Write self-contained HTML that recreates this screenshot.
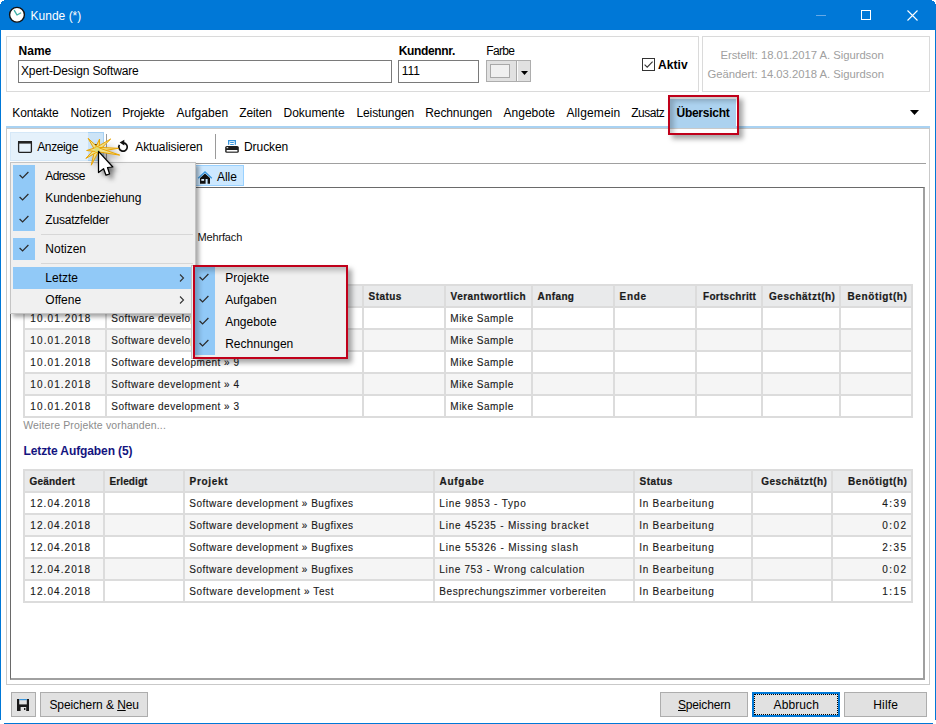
<!DOCTYPE html>
<html><head><meta charset="utf-8"><title>Kunde</title><style>
html,body{margin:0;padding:0}
body{width:936px;height:724px;position:relative;overflow:hidden;background:#fff;font-family:"Liberation Sans",sans-serif;font-size:12px;color:#000}
.a{position:absolute}
.t{position:absolute;white-space:nowrap;line-height:14px}
u{text-decoration:underline;text-underline-offset:1px}
</style></head><body>
<div class="a" style="left:0px;top:0px;width:936px;height:30px;background:#0078d7"></div>
<div class="a" style="left:0px;top:0px;width:1px;height:720px;background:#0078d7"></div>
<div class="a" style="left:935px;top:0px;width:1px;height:720px;background:#0078d7"></div>
<div class="a" style="left:4px;top:723px;width:929px;height:1px;background:#0078d7"></div>
<div class="a" style="left:0px;top:0px;width:4px;height:1px;background:#fff"></div>
<div class="a" style="left:0px;top:1px;width:2px;height:1px;background:#fff"></div>
<div class="a" style="left:0px;top:2px;width:1px;height:2px;background:#fff"></div>
<div class="a" style="left:932px;top:0px;width:4px;height:1px;background:#fff"></div>
<div class="a" style="left:934px;top:1px;width:2px;height:1px;background:#fff"></div>
<div class="a" style="left:935px;top:2px;width:1px;height:2px;background:#fff"></div>
<svg class="a" style="left:8px;top:6px" width="18" height="18" viewBox="0 0 18 18">
<circle cx="9" cy="8.75" r="7.4" fill="#fff" stroke="#111" stroke-width="1.4"/>
<path d="M6.4 4.6 L9 9 L12.6 7" fill="none" stroke="#3fb0a8" stroke-width="1.4" stroke-linecap="round" stroke-linejoin="round"/>
</svg>
<div class="t" style="left:30.60px;top:9.00px;font-size:12px;color:#fff;">Kunde (*)</div>
<div class="a" style="left:816px;top:15px;width:10px;height:1px;background:#66a9e6"></div>
<div class="a" style="left:861px;top:10px;width:10px;height:10px;border:1px solid #fff;box-sizing:border-box"></div>
<svg class="a" style="left:906px;top:9px" width="13" height="13" viewBox="0 0 13 13">
<path d="M1.5 1.5 L11.5 11.5 M11.5 1.5 L1.5 11.5" stroke="#fff" stroke-width="1.1"/></svg>
<div class="a" style="left:6px;top:36px;width:693px;height:56px;border:1px solid #dadada;box-sizing:border-box"></div>
<div class="a" style="left:702px;top:36px;width:228px;height:56px;border:1px solid #dadada;box-sizing:border-box"></div>
<div class="t" style="left:18.60px;top:44.00px;font-size:12px;font-weight:700;">Name</div>
<div class="a" style="left:18px;top:60px;width:374px;height:23px;border:1px solid #7a7a7a;box-sizing:border-box;background:#fff"></div>
<div class="t" style="left:21.00px;top:64.00px;font-size:12px;letter-spacing:-0.15px;">Xpert-Design Software</div>
<div class="t" style="left:398.70px;top:44.00px;font-size:12px;font-weight:700;letter-spacing:-0.34px;">Kundennr.</div>
<div class="a" style="left:398px;top:60px;width:81px;height:23px;border:1px solid #7a7a7a;box-sizing:border-box;background:#fff"></div>
<div class="t" style="left:401.70px;top:64.00px;font-size:12px;">111</div>
<div class="t" style="left:486.30px;top:44.00px;font-size:12px;letter-spacing:-0.69px;">Farbe</div>
<div class="a" style="left:486px;top:60px;width:45px;height:22px;border:1px solid #adadad;box-sizing:border-box;background:#e1e1e1"></div>
<div class="a" style="left:490px;top:64px;width:20px;height:14px;border:1px solid #a8a8a8;box-sizing:border-box;background:#f0f0f0"></div>
<div class="a" style="left:516px;top:61px;width:1px;height:20px;background:#a8a8a8"></div>
<div class="a" style="left:517px;top:61px;width:1px;height:20px;background:#fbfbfb"></div>
<svg class="a" style="left:520px;top:70px" width="10" height="6"><path d="M1 1 H8 L4.5 5 Z" fill="#000"/></svg>
<div class="a" style="left:642px;top:58px;width:13px;height:13px;border:1px solid #333;box-sizing:border-box;background:#fff"></div>
<svg class="a" style="left:642px;top:58px" width="13" height="13"><path d="M2.6 6.6 L5.2 9.2 L10.6 3.6" fill="none" stroke="#333" stroke-width="1.1"/></svg>
<div class="t" style="left:658.00px;top:58.00px;font-size:12px;font-weight:700;letter-spacing:0.06px;">Aktiv</div>
<div class="t" style="left:720.50px;top:48.00px;font-size:11.3px;color:#a0a0a0;letter-spacing:-0.04px;">Erstellt: 18.01.2017 A. Sigurdson</div>
<div class="t" style="left:707.50px;top:67.00px;font-size:11.3px;color:#a0a0a0;letter-spacing:-0.02px;">Geändert: 14.03.2018 A. Sigurdson</div>
<div class="a" style="left:6px;top:126px;width:924px;height:2px;background:#a9d2f2"></div>
<div class="a" style="left:6px;top:128px;width:924px;height:557px;border:1px solid #c9c9c9;border-top-color:#c9c9c9;box-sizing:border-box"></div>
<div class="a" style="left:670px;top:99px;width:66px;height:29px;background:#acd2ef"></div>
<div class="t" style="left:12.30px;top:106.00px;font-size:12px;letter-spacing:-0.14px;">Kontakte</div>
<div class="t" style="left:70.50px;top:106.00px;font-size:12px;letter-spacing:0.05px;">Notizen</div>
<div class="t" style="left:122.30px;top:106.00px;font-size:12px;letter-spacing:-0.25px;">Projekte</div>
<div class="t" style="left:176.40px;top:106.00px;font-size:12px;letter-spacing:0.04px;">Aufgaben</div>
<div class="t" style="left:239.20px;top:106.00px;font-size:12px;letter-spacing:-0.12px;">Zeiten</div>
<div class="t" style="left:283.60px;top:106.00px;font-size:12px;letter-spacing:-0.05px;">Dokumente</div>
<div class="t" style="left:356.40px;top:106.00px;font-size:12px;letter-spacing:-0.09px;">Leistungen</div>
<div class="t" style="left:425.30px;top:106.00px;font-size:12px;letter-spacing:-0.12px;">Rechnungen</div>
<div class="t" style="left:503.60px;top:106.00px;font-size:12px;">Angebote</div>
<div class="t" style="left:566.40px;top:106.00px;font-size:12px;letter-spacing:0.14px;">Allgemein</div>
<div class="t" style="left:631.30px;top:106.00px;font-size:12px;letter-spacing:-0.52px;">Zusatz</div>
<div class="t" style="left:676.50px;top:106.00px;font-size:12px;font-weight:700;letter-spacing:-0.27px;">Übersicht</div>
<svg class="a" style="left:909px;top:109px" width="12" height="8"><path d="M1 1 H10 L5.5 6 Z" fill="#000"/></svg>
<div class="a" style="left:10px;top:132px;width:94px;height:29px;background:#e5f1fb;border:1px solid #d5e8f8;box-sizing:border-box"></div>
<div class="a" style="left:88px;top:132px;width:16px;height:29px;background:#cce4f7;border:1px solid #a6d0f3;border-left:none;box-sizing:border-box"></div>
<svg class="a" style="left:92px;top:143px" width="8" height="5"><path d="M1.5 1 H5.5 L3.5 3.2 Z" fill="#000"/></svg>
<svg class="a" style="left:17px;top:140px" width="16" height="14" viewBox="0 0 16 14">
<rect x="1.6" y="1.6" width="12.8" height="10.8" rx="0.8" fill="none" stroke="#222" stroke-width="1.3"/>
<rect x="1" y="1" width="14" height="2.6" fill="#222"/></svg>
<div class="t" style="left:37.20px;top:140.00px;font-size:12px;letter-spacing:-0.37px;">Anzeige</div>
<div class="a" style="left:106px;top:134px;width:1px;height:25px;background:#9a9a9a"></div>
<svg class="a" style="left:115px;top:138px" width="16" height="16" viewBox="0 0 16 16">
<path d="M4.4 6.9 A4.2 4.2 0 1 0 8.3 4.8" fill="none" stroke="#111" stroke-width="1.7"/>
<path d="M4.6 4.6 L9.3 1.8 L9.3 7.6 Z" fill="#111"/></svg>
<div class="t" style="left:135.30px;top:140.00px;font-size:12px;letter-spacing:-0.11px;">Aktualisieren</div>
<div class="a" style="left:215px;top:134px;width:1px;height:25px;background:#9a9a9a"></div>
<svg class="a" style="left:224px;top:139px" width="16" height="15" viewBox="0 0 16 15">
<path d="M4.65 5.8 V1.65 H11.35 V5.8" fill="none" stroke="#3a96dd" stroke-width="1.3"/>
<path d="M6.2 3.5 H9.8 M6.2 5.5 H9.8" stroke="#3a96dd" stroke-width="1"/>
<rect x="1.2" y="7" width="13.6" height="6.8" rx="1.6" fill="#1e1e1e"/>
<rect x="2.6" y="11" width="10.8" height="1.6" fill="#fff"/>
<rect x="2.6" y="8.2" width="1.6" height="1" fill="#fff"/></svg>
<div class="t" style="left:244.00px;top:140.00px;font-size:12px;letter-spacing:-0.07px;">Drucken</div>
<div class="a" style="left:10px;top:163px;width:916px;height:1px;background:#a0a0a0"></div>
<div class="a" style="left:10px;top:187px;width:915px;height:493px;border-top:1px solid #6a6a6a;border-left:1px solid #6a6a6a;border-right:2px solid #a0a0a0;border-bottom:2px solid #a0a0a0;box-sizing:border-box;background:#fff"></div>
<div class="a" style="left:150px;top:165px;width:94px;height:21px;background:#cce8ff;border:1px solid #99d1ff;box-sizing:border-box"></div>
<svg class="a" style="left:197px;top:170px" width="16" height="15" viewBox="0 0 16 15">
<path d="M3 13.8 V8 L8 3.6 L13 8 V13.8 H10.6 V9 H8.6 V13.8 Z" fill="#111"/>
<rect x="4.3" y="9" width="2.8" height="1.8" fill="#dff0ff"/>
<path d="M1.2 8.2 L8 2 L14.8 8.2" fill="none" stroke="#3a96dd" stroke-width="1.3"/></svg>
<div class="t" style="left:217.00px;top:170.00px;font-size:12px;letter-spacing:-0.05px;">Alle</div>
<div class="t" style="left:197.40px;top:230.00px;font-size:11px;color:#111;letter-spacing:-0.13px;">Mehrfach</div>
<div class="a" style="left:23px;top:284px;width:890px;height:134px;background:#dcdcdc"></div>
<div class="a" style="left:25px;top:286px;width:80px;height:20px;background:#e9eaeb"></div>
<div class="a" style="left:107px;top:286px;width:255px;height:20px;background:#e9eaeb"></div>
<div class="a" style="left:364px;top:286px;width:80px;height:20px;background:#e9eaeb"></div>
<div class="a" style="left:446px;top:286px;width:85px;height:20px;background:#e9eaeb"></div>
<div class="a" style="left:533px;top:286px;width:80px;height:20px;background:#e9eaeb"></div>
<div class="a" style="left:615px;top:286px;width:80px;height:20px;background:#e9eaeb"></div>
<div class="a" style="left:697px;top:286px;width:64px;height:20px;background:#e9eaeb"></div>
<div class="a" style="left:763px;top:286px;width:76px;height:20px;background:#e9eaeb"></div>
<div class="a" style="left:841px;top:286px;width:70px;height:20px;background:#e9eaeb"></div>
<div class="a" style="left:25px;top:308px;width:80px;height:20px;background:#ffffff"></div>
<div class="a" style="left:107px;top:308px;width:255px;height:20px;background:#ffffff"></div>
<div class="a" style="left:364px;top:308px;width:80px;height:20px;background:#ffffff"></div>
<div class="a" style="left:446px;top:308px;width:85px;height:20px;background:#ffffff"></div>
<div class="a" style="left:533px;top:308px;width:80px;height:20px;background:#ffffff"></div>
<div class="a" style="left:615px;top:308px;width:80px;height:20px;background:#ffffff"></div>
<div class="a" style="left:697px;top:308px;width:64px;height:20px;background:#ffffff"></div>
<div class="a" style="left:763px;top:308px;width:76px;height:20px;background:#ffffff"></div>
<div class="a" style="left:841px;top:308px;width:70px;height:20px;background:#ffffff"></div>
<div class="a" style="left:25px;top:330px;width:80px;height:20px;background:#f5f5f5"></div>
<div class="a" style="left:107px;top:330px;width:255px;height:20px;background:#f5f5f5"></div>
<div class="a" style="left:364px;top:330px;width:80px;height:20px;background:#f5f5f5"></div>
<div class="a" style="left:446px;top:330px;width:85px;height:20px;background:#f5f5f5"></div>
<div class="a" style="left:533px;top:330px;width:80px;height:20px;background:#f5f5f5"></div>
<div class="a" style="left:615px;top:330px;width:80px;height:20px;background:#f5f5f5"></div>
<div class="a" style="left:697px;top:330px;width:64px;height:20px;background:#f5f5f5"></div>
<div class="a" style="left:763px;top:330px;width:76px;height:20px;background:#f5f5f5"></div>
<div class="a" style="left:841px;top:330px;width:70px;height:20px;background:#f5f5f5"></div>
<div class="a" style="left:25px;top:352px;width:80px;height:20px;background:#ffffff"></div>
<div class="a" style="left:107px;top:352px;width:255px;height:20px;background:#ffffff"></div>
<div class="a" style="left:364px;top:352px;width:80px;height:20px;background:#ffffff"></div>
<div class="a" style="left:446px;top:352px;width:85px;height:20px;background:#ffffff"></div>
<div class="a" style="left:533px;top:352px;width:80px;height:20px;background:#ffffff"></div>
<div class="a" style="left:615px;top:352px;width:80px;height:20px;background:#ffffff"></div>
<div class="a" style="left:697px;top:352px;width:64px;height:20px;background:#ffffff"></div>
<div class="a" style="left:763px;top:352px;width:76px;height:20px;background:#ffffff"></div>
<div class="a" style="left:841px;top:352px;width:70px;height:20px;background:#ffffff"></div>
<div class="a" style="left:25px;top:374px;width:80px;height:20px;background:#f5f5f5"></div>
<div class="a" style="left:107px;top:374px;width:255px;height:20px;background:#f5f5f5"></div>
<div class="a" style="left:364px;top:374px;width:80px;height:20px;background:#f5f5f5"></div>
<div class="a" style="left:446px;top:374px;width:85px;height:20px;background:#f5f5f5"></div>
<div class="a" style="left:533px;top:374px;width:80px;height:20px;background:#f5f5f5"></div>
<div class="a" style="left:615px;top:374px;width:80px;height:20px;background:#f5f5f5"></div>
<div class="a" style="left:697px;top:374px;width:64px;height:20px;background:#f5f5f5"></div>
<div class="a" style="left:763px;top:374px;width:76px;height:20px;background:#f5f5f5"></div>
<div class="a" style="left:841px;top:374px;width:70px;height:20px;background:#f5f5f5"></div>
<div class="a" style="left:25px;top:396px;width:80px;height:20px;background:#ffffff"></div>
<div class="a" style="left:107px;top:396px;width:255px;height:20px;background:#ffffff"></div>
<div class="a" style="left:364px;top:396px;width:80px;height:20px;background:#ffffff"></div>
<div class="a" style="left:446px;top:396px;width:85px;height:20px;background:#ffffff"></div>
<div class="a" style="left:533px;top:396px;width:80px;height:20px;background:#ffffff"></div>
<div class="a" style="left:615px;top:396px;width:80px;height:20px;background:#ffffff"></div>
<div class="a" style="left:697px;top:396px;width:64px;height:20px;background:#ffffff"></div>
<div class="a" style="left:763px;top:396px;width:76px;height:20px;background:#ffffff"></div>
<div class="a" style="left:841px;top:396px;width:70px;height:20px;background:#ffffff"></div>
<div class="t" style="left:29.60px;top:289.50px;font-size:10px;font-weight:700;color:#1a1a1a;letter-spacing:0.19px;-webkit-text-stroke:0.2px #1a1a1a;">Geändert</div>
<div class="t" style="left:111.60px;top:289.50px;font-size:10px;font-weight:700;color:#1a1a1a;letter-spacing:0.70px;-webkit-text-stroke:0.2px #1a1a1a;">Projekt</div>
<div class="t" style="left:368.60px;top:289.50px;font-size:10px;font-weight:700;color:#1a1a1a;letter-spacing:0.44px;-webkit-text-stroke:0.2px #1a1a1a;">Status</div>
<div class="t" style="left:450.60px;top:289.50px;font-size:10px;font-weight:700;color:#1a1a1a;letter-spacing:0.47px;-webkit-text-stroke:0.2px #1a1a1a;">Verantwortlich</div>
<div class="t" style="left:537.60px;top:289.50px;font-size:10px;font-weight:700;color:#1a1a1a;letter-spacing:0.39px;-webkit-text-stroke:0.2px #1a1a1a;">Anfang</div>
<div class="t" style="left:619.60px;top:289.50px;font-size:10px;font-weight:700;color:#1a1a1a;letter-spacing:0.70px;-webkit-text-stroke:0.2px #1a1a1a;">Ende</div>
<div class="t" style="left:703.00px;top:289.50px;font-size:10px;font-weight:700;color:#1a1a1a;letter-spacing:0.29px;-webkit-text-stroke:0.2px #1a1a1a;">Fortschritt</div>
<div class="t" style="left:769.10px;top:289.50px;font-size:10px;font-weight:700;color:#1a1a1a;letter-spacing:0.48px;-webkit-text-stroke:0.2px #1a1a1a;">Geschätzt(h)</div>
<div class="t" style="left:847.50px;top:289.50px;font-size:10px;font-weight:700;color:#1a1a1a;letter-spacing:0.61px;-webkit-text-stroke:0.2px #1a1a1a;">Benötigt(h)</div>
<div class="t" style="left:30.30px;top:311.50px;font-size:10px;color:#1a1a1a;letter-spacing:1.11px;-webkit-text-stroke:0.12px #1a1a1a;">10.01.2018</div>
<div class="t" style="left:111.30px;top:311.50px;font-size:10px;color:#1a1a1a;letter-spacing:0.50px;-webkit-text-stroke:0.12px #1a1a1a;">Software development » 8</div>
<div class="t" style="left:450.30px;top:311.50px;font-size:10px;color:#1a1a1a;letter-spacing:0.51px;-webkit-text-stroke:0.12px #1a1a1a;">Mike Sample</div>
<div class="t" style="left:30.30px;top:333.50px;font-size:10px;color:#1a1a1a;letter-spacing:1.11px;-webkit-text-stroke:0.12px #1a1a1a;">10.01.2018</div>
<div class="t" style="left:111.30px;top:333.50px;font-size:10px;color:#1a1a1a;letter-spacing:0.50px;-webkit-text-stroke:0.12px #1a1a1a;">Software development » 7</div>
<div class="t" style="left:450.30px;top:333.50px;font-size:10px;color:#1a1a1a;letter-spacing:0.51px;-webkit-text-stroke:0.12px #1a1a1a;">Mike Sample</div>
<div class="t" style="left:30.30px;top:355.50px;font-size:10px;color:#1a1a1a;letter-spacing:1.11px;-webkit-text-stroke:0.12px #1a1a1a;">10.01.2018</div>
<div class="t" style="left:111.30px;top:355.50px;font-size:10px;color:#1a1a1a;letter-spacing:0.50px;-webkit-text-stroke:0.12px #1a1a1a;">Software development » 9</div>
<div class="t" style="left:450.30px;top:355.50px;font-size:10px;color:#1a1a1a;letter-spacing:0.51px;-webkit-text-stroke:0.12px #1a1a1a;">Mike Sample</div>
<div class="t" style="left:30.30px;top:377.50px;font-size:10px;color:#1a1a1a;letter-spacing:1.11px;-webkit-text-stroke:0.12px #1a1a1a;">10.01.2018</div>
<div class="t" style="left:111.30px;top:377.50px;font-size:10px;color:#1a1a1a;letter-spacing:0.50px;-webkit-text-stroke:0.12px #1a1a1a;">Software development » 4</div>
<div class="t" style="left:450.30px;top:377.50px;font-size:10px;color:#1a1a1a;letter-spacing:0.51px;-webkit-text-stroke:0.12px #1a1a1a;">Mike Sample</div>
<div class="t" style="left:30.30px;top:399.50px;font-size:10px;color:#1a1a1a;letter-spacing:1.11px;-webkit-text-stroke:0.12px #1a1a1a;">10.01.2018</div>
<div class="t" style="left:111.30px;top:399.50px;font-size:10px;color:#1a1a1a;letter-spacing:0.50px;-webkit-text-stroke:0.12px #1a1a1a;">Software development » 3</div>
<div class="t" style="left:450.30px;top:399.50px;font-size:10px;color:#1a1a1a;letter-spacing:0.51px;-webkit-text-stroke:0.12px #1a1a1a;">Mike Sample</div>
<div class="t" style="left:23.20px;top:418.00px;font-size:10.5px;color:#8c8c8c;letter-spacing:0.14px;">Weitere Projekte vorhanden...</div>
<div class="t" style="left:23.50px;top:444.00px;font-size:12px;font-weight:700;color:#141480;letter-spacing:-0.10px;">Letzte Aufgaben (5)</div>
<div class="a" style="left:23px;top:469px;width:890px;height:134px;background:#dcdcdc"></div>
<div class="a" style="left:25px;top:471px;width:78px;height:20px;background:#e9eaeb"></div>
<div class="a" style="left:105px;top:471px;width:78px;height:20px;background:#e9eaeb"></div>
<div class="a" style="left:185px;top:471px;width:248px;height:20px;background:#e9eaeb"></div>
<div class="a" style="left:435px;top:471px;width:198px;height:20px;background:#e9eaeb"></div>
<div class="a" style="left:635px;top:471px;width:116px;height:20px;background:#e9eaeb"></div>
<div class="a" style="left:753px;top:471px;width:78px;height:20px;background:#e9eaeb"></div>
<div class="a" style="left:833px;top:471px;width:78px;height:20px;background:#e9eaeb"></div>
<div class="a" style="left:25px;top:493px;width:78px;height:20px;background:#ffffff"></div>
<div class="a" style="left:105px;top:493px;width:78px;height:20px;background:#ffffff"></div>
<div class="a" style="left:185px;top:493px;width:248px;height:20px;background:#ffffff"></div>
<div class="a" style="left:435px;top:493px;width:198px;height:20px;background:#ffffff"></div>
<div class="a" style="left:635px;top:493px;width:116px;height:20px;background:#ffffff"></div>
<div class="a" style="left:753px;top:493px;width:78px;height:20px;background:#ffffff"></div>
<div class="a" style="left:833px;top:493px;width:78px;height:20px;background:#ffffff"></div>
<div class="a" style="left:25px;top:515px;width:78px;height:20px;background:#f5f5f5"></div>
<div class="a" style="left:105px;top:515px;width:78px;height:20px;background:#f5f5f5"></div>
<div class="a" style="left:185px;top:515px;width:248px;height:20px;background:#f5f5f5"></div>
<div class="a" style="left:435px;top:515px;width:198px;height:20px;background:#f5f5f5"></div>
<div class="a" style="left:635px;top:515px;width:116px;height:20px;background:#f5f5f5"></div>
<div class="a" style="left:753px;top:515px;width:78px;height:20px;background:#f5f5f5"></div>
<div class="a" style="left:833px;top:515px;width:78px;height:20px;background:#f5f5f5"></div>
<div class="a" style="left:25px;top:537px;width:78px;height:20px;background:#ffffff"></div>
<div class="a" style="left:105px;top:537px;width:78px;height:20px;background:#ffffff"></div>
<div class="a" style="left:185px;top:537px;width:248px;height:20px;background:#ffffff"></div>
<div class="a" style="left:435px;top:537px;width:198px;height:20px;background:#ffffff"></div>
<div class="a" style="left:635px;top:537px;width:116px;height:20px;background:#ffffff"></div>
<div class="a" style="left:753px;top:537px;width:78px;height:20px;background:#ffffff"></div>
<div class="a" style="left:833px;top:537px;width:78px;height:20px;background:#ffffff"></div>
<div class="a" style="left:25px;top:559px;width:78px;height:20px;background:#f5f5f5"></div>
<div class="a" style="left:105px;top:559px;width:78px;height:20px;background:#f5f5f5"></div>
<div class="a" style="left:185px;top:559px;width:248px;height:20px;background:#f5f5f5"></div>
<div class="a" style="left:435px;top:559px;width:198px;height:20px;background:#f5f5f5"></div>
<div class="a" style="left:635px;top:559px;width:116px;height:20px;background:#f5f5f5"></div>
<div class="a" style="left:753px;top:559px;width:78px;height:20px;background:#f5f5f5"></div>
<div class="a" style="left:833px;top:559px;width:78px;height:20px;background:#f5f5f5"></div>
<div class="a" style="left:25px;top:581px;width:78px;height:20px;background:#ffffff"></div>
<div class="a" style="left:105px;top:581px;width:78px;height:20px;background:#ffffff"></div>
<div class="a" style="left:185px;top:581px;width:248px;height:20px;background:#ffffff"></div>
<div class="a" style="left:435px;top:581px;width:198px;height:20px;background:#ffffff"></div>
<div class="a" style="left:635px;top:581px;width:116px;height:20px;background:#ffffff"></div>
<div class="a" style="left:753px;top:581px;width:78px;height:20px;background:#ffffff"></div>
<div class="a" style="left:833px;top:581px;width:78px;height:20px;background:#ffffff"></div>
<div class="t" style="left:29.60px;top:474.50px;font-size:10px;font-weight:700;color:#1a1a1a;letter-spacing:0.19px;-webkit-text-stroke:0.2px #1a1a1a;">Geändert</div>
<div class="t" style="left:109.60px;top:474.50px;font-size:10px;font-weight:700;color:#1a1a1a;letter-spacing:0.09px;-webkit-text-stroke:0.2px #1a1a1a;">Erledigt</div>
<div class="t" style="left:189.60px;top:474.50px;font-size:10px;font-weight:700;color:#1a1a1a;letter-spacing:0.70px;-webkit-text-stroke:0.2px #1a1a1a;">Projekt</div>
<div class="t" style="left:439.60px;top:474.50px;font-size:10px;font-weight:700;color:#1a1a1a;letter-spacing:0.70px;-webkit-text-stroke:0.2px #1a1a1a;">Aufgabe</div>
<div class="t" style="left:639.60px;top:474.50px;font-size:10px;font-weight:700;color:#1a1a1a;letter-spacing:0.44px;-webkit-text-stroke:0.2px #1a1a1a;">Status</div>
<div class="t" style="left:761.20px;top:474.50px;font-size:10px;font-weight:700;color:#1a1a1a;letter-spacing:0.47px;-webkit-text-stroke:0.2px #1a1a1a;">Geschätzt(h)</div>
<div class="t" style="left:848.00px;top:474.50px;font-size:10px;font-weight:700;color:#1a1a1a;letter-spacing:0.56px;-webkit-text-stroke:0.2px #1a1a1a;">Benötigt(h)</div>
<div class="t" style="left:30.30px;top:496.50px;font-size:10px;color:#1a1a1a;letter-spacing:1.08px;-webkit-text-stroke:0.12px #1a1a1a;">12.04.2018</div>
<div class="t" style="left:189.30px;top:496.50px;font-size:10px;color:#1a1a1a;letter-spacing:0.49px;-webkit-text-stroke:0.12px #1a1a1a;">Software development » Bugfixes</div>
<div class="t" style="left:439.30px;top:496.50px;font-size:10px;color:#1a1a1a;letter-spacing:0.81px;-webkit-text-stroke:0.12px #1a1a1a;">Line 9853 - Typo</div>
<div class="t" style="left:639.30px;top:496.50px;font-size:10px;color:#1a1a1a;letter-spacing:0.72px;-webkit-text-stroke:0.12px #1a1a1a;">In Bearbeitung</div>
<div class="t" style="left:882.35px;top:496.50px;font-size:10px;color:#1a1a1a;letter-spacing:1.45px;-webkit-text-stroke:0.12px #1a1a1a;">4:39</div>
<div class="t" style="left:30.30px;top:518.50px;font-size:10px;color:#1a1a1a;letter-spacing:1.08px;-webkit-text-stroke:0.12px #1a1a1a;">12.04.2018</div>
<div class="t" style="left:189.30px;top:518.50px;font-size:10px;color:#1a1a1a;letter-spacing:0.49px;-webkit-text-stroke:0.12px #1a1a1a;">Software development » Bugfixes</div>
<div class="t" style="left:439.30px;top:518.50px;font-size:10px;color:#1a1a1a;letter-spacing:0.79px;-webkit-text-stroke:0.12px #1a1a1a;">Line 45235 - Missing bracket</div>
<div class="t" style="left:639.30px;top:518.50px;font-size:10px;color:#1a1a1a;letter-spacing:0.72px;-webkit-text-stroke:0.12px #1a1a1a;">In Bearbeitung</div>
<div class="t" style="left:882.35px;top:518.50px;font-size:10px;color:#1a1a1a;letter-spacing:1.45px;-webkit-text-stroke:0.12px #1a1a1a;">0:02</div>
<div class="t" style="left:30.30px;top:540.50px;font-size:10px;color:#1a1a1a;letter-spacing:1.08px;-webkit-text-stroke:0.12px #1a1a1a;">12.04.2018</div>
<div class="t" style="left:189.30px;top:540.50px;font-size:10px;color:#1a1a1a;letter-spacing:0.49px;-webkit-text-stroke:0.12px #1a1a1a;">Software development » Bugfixes</div>
<div class="t" style="left:439.30px;top:540.50px;font-size:10px;color:#1a1a1a;letter-spacing:0.81px;-webkit-text-stroke:0.12px #1a1a1a;">Line 55326 - Missing slash</div>
<div class="t" style="left:639.30px;top:540.50px;font-size:10px;color:#1a1a1a;letter-spacing:0.72px;-webkit-text-stroke:0.12px #1a1a1a;">In Bearbeitung</div>
<div class="t" style="left:882.35px;top:540.50px;font-size:10px;color:#1a1a1a;letter-spacing:1.45px;-webkit-text-stroke:0.12px #1a1a1a;">2:35</div>
<div class="t" style="left:30.30px;top:562.50px;font-size:10px;color:#1a1a1a;letter-spacing:1.08px;-webkit-text-stroke:0.12px #1a1a1a;">12.04.2018</div>
<div class="t" style="left:189.30px;top:562.50px;font-size:10px;color:#1a1a1a;letter-spacing:0.49px;-webkit-text-stroke:0.12px #1a1a1a;">Software development » Bugfixes</div>
<div class="t" style="left:439.30px;top:562.50px;font-size:10px;color:#1a1a1a;letter-spacing:0.68px;-webkit-text-stroke:0.12px #1a1a1a;">Line 753 - Wrong calculation</div>
<div class="t" style="left:639.30px;top:562.50px;font-size:10px;color:#1a1a1a;letter-spacing:0.72px;-webkit-text-stroke:0.12px #1a1a1a;">In Bearbeitung</div>
<div class="t" style="left:882.35px;top:562.50px;font-size:10px;color:#1a1a1a;letter-spacing:1.45px;-webkit-text-stroke:0.12px #1a1a1a;">0:02</div>
<div class="t" style="left:30.30px;top:584.50px;font-size:10px;color:#1a1a1a;letter-spacing:1.08px;-webkit-text-stroke:0.12px #1a1a1a;">12.04.2018</div>
<div class="t" style="left:189.30px;top:584.50px;font-size:10px;color:#1a1a1a;letter-spacing:0.59px;-webkit-text-stroke:0.12px #1a1a1a;">Software development » Test</div>
<div class="t" style="left:439.30px;top:584.50px;font-size:10px;color:#1a1a1a;letter-spacing:0.59px;-webkit-text-stroke:0.12px #1a1a1a;">Besprechungszimmer vorbereiten</div>
<div class="t" style="left:639.30px;top:584.50px;font-size:10px;color:#1a1a1a;letter-spacing:0.72px;-webkit-text-stroke:0.12px #1a1a1a;">In Bearbeitung</div>
<div class="t" style="left:882.35px;top:584.50px;font-size:10px;color:#1a1a1a;letter-spacing:1.45px;-webkit-text-stroke:0.12px #1a1a1a;">1:15</div>
<div class="a" style="left:11px;top:692px;width:25px;height:25px;background:#e1e1e1;border:1px solid #adadad;box-sizing:border-box"></div>
<svg class="a" style="left:16px;top:698px" width="14" height="14" viewBox="0 0 14 14">
<path d="M1 1 H13 V13 H1 Z" fill="#1a1a1a"/>
<rect x="3.2" y="1" width="7.6" height="5.4" fill="#e1e1e1"/>
<rect x="3.2" y="1" width="7.6" height="1.2" fill="#3a96dd"/>
<rect x="4.6" y="9" width="5.6" height="4" fill="#e1e1e1"/>
<rect x="8" y="10" width="1.4" height="2" fill="#1a1a1a"/></svg>
<div class="a" style="left:40px;top:692px;width:108px;height:25px;background:#e1e1e1;border:1px solid #adadad;box-sizing:border-box"></div>
<div class="t" style="left:49.40px;top:698.00px;font-size:12px;letter-spacing:-0.08px;">Speichern &amp; <u>N</u>eu</div>
<div class="a" style="left:660px;top:692px;width:88px;height:25px;background:#e1e1e1;border:1px solid #adadad;box-sizing:border-box"></div>
<div class="t" style="left:678.00px;top:698.00px;font-size:12px;letter-spacing:-0.17px;"><u>S</u>peichern</div>
<div class="a" style="left:752px;top:692px;width:88px;height:25px;background:#e1e1e1;border:2px solid #0078d7;box-sizing:border-box"></div>
<div class="a" style="left:754px;top:694px;width:84px;height:21px;border:1px dotted #000;box-sizing:border-box"></div>
<div class="t" style="left:773.60px;top:698.00px;font-size:12px;letter-spacing:0.10px;">Abbruch</div>
<div class="a" style="left:844px;top:692px;width:83px;height:25px;background:#e1e1e1;border:1px solid #adadad;box-sizing:border-box"></div>
<div class="t" style="left:873.20px;top:698.00px;font-size:12px;letter-spacing:0.19px;">Hilfe</div>
<div class="a" style="left:668px;top:95px;width:71px;height:40px;border:2px solid #c0001a;box-sizing:border-box;box-shadow:4px 4px 5px rgba(0,0,0,0.35), inset 4px 4px 5px rgba(0,0,0,0.22)"></div>
<div class="a" style="left:10px;top:162px;width:186px;height:152px;background:#f0f0f0;border:1px solid #c4c4c4;box-sizing:border-box;box-shadow:3px 3px 4px rgba(0,0,0,0.35)"></div>
<div class="a" style="left:13px;top:165px;width:22px;height:66px;background:#91c9f7"></div>
<div class="a" style="left:13px;top:238px;width:22px;height:22px;background:#91c9f7"></div>
<div class="a" style="left:41px;top:234px;width:152px;height:1px;background:#d7d7d7"></div>
<div class="a" style="left:41px;top:263px;width:152px;height:1px;background:#d7d7d7"></div>
<div class="a" style="left:13px;top:267px;width:178px;height:22px;background:#91c9f7"></div>
<svg class="a" style="left:18px;top:169.6px" width="12" height="10"><path d="M1.6 5 L4.6 8 L10.4 2" fill="none" stroke="#2b2b2b" stroke-width="1.2"/></svg>
<svg class="a" style="left:18px;top:191.6px" width="12" height="10"><path d="M1.6 5 L4.6 8 L10.4 2" fill="none" stroke="#2b2b2b" stroke-width="1.2"/></svg>
<svg class="a" style="left:18px;top:213.6px" width="12" height="10"><path d="M1.6 5 L4.6 8 L10.4 2" fill="none" stroke="#2b2b2b" stroke-width="1.2"/></svg>
<svg class="a" style="left:18px;top:243.1px" width="12" height="10"><path d="M1.6 5 L4.6 8 L10.4 2" fill="none" stroke="#2b2b2b" stroke-width="1.2"/></svg>
<div class="t" style="left:45.30px;top:169.00px;font-size:12px;letter-spacing:-0.66px;">Adresse</div>
<div class="t" style="left:45.30px;top:191.00px;font-size:12px;letter-spacing:-0.05px;">Kundenbeziehung</div>
<div class="t" style="left:45.30px;top:213.00px;font-size:12px;letter-spacing:-0.20px;">Zusatzfelder</div>
<div class="t" style="left:45.30px;top:242.00px;font-size:12px;">Notizen</div>
<div class="t" style="left:45.30px;top:271.00px;font-size:12px;">Letzte</div>
<div class="t" style="left:45.30px;top:293.00px;font-size:12px;">Offene</div>
<svg class="a" style="left:178px;top:273px" width="8" height="10"><path d="M2 1.5 L5.5 5 L2 8.5" fill="none" stroke="#333" stroke-width="1.1"/></svg>
<svg class="a" style="left:178px;top:295px" width="8" height="10"><path d="M2 1.5 L5.5 5 L2 8.5" fill="none" stroke="#333" stroke-width="1.1"/></svg>
<div class="a" style="left:191px;top:265px;width:157px;height:94px;background:#f0f0f0;border:1px solid #c4c4c4;box-sizing:border-box"></div>
<div class="a" style="left:195px;top:267px;width:20px;height:88px;background:#91c9f7"></div>
<svg class="a" style="left:198px;top:271.8px" width="12" height="10"><path d="M1.6 5 L4.6 8 L10.4 2" fill="none" stroke="#2b2b2b" stroke-width="1.2"/></svg>
<svg class="a" style="left:198px;top:293.8px" width="12" height="10"><path d="M1.6 5 L4.6 8 L10.4 2" fill="none" stroke="#2b2b2b" stroke-width="1.2"/></svg>
<svg class="a" style="left:198px;top:315.8px" width="12" height="10"><path d="M1.6 5 L4.6 8 L10.4 2" fill="none" stroke="#2b2b2b" stroke-width="1.2"/></svg>
<svg class="a" style="left:198px;top:337.8px" width="12" height="10"><path d="M1.6 5 L4.6 8 L10.4 2" fill="none" stroke="#2b2b2b" stroke-width="1.2"/></svg>
<div class="t" style="left:225.20px;top:271.00px;font-size:12px;">Projekte</div>
<div class="t" style="left:225.20px;top:293.00px;font-size:12px;">Aufgaben</div>
<div class="t" style="left:225.20px;top:315.00px;font-size:12px;">Angebote</div>
<div class="t" style="left:225.20px;top:337.00px;font-size:12px;">Rechnungen</div>
<div class="a" style="left:193px;top:265px;width:155px;height:94px;border:2px solid #c0001a;box-sizing:border-box;box-shadow:4px 4px 5px rgba(0,0,0,0.35), inset 4px 4px 5px rgba(0,0,0,0.22)"></div>
<svg class="a" style="left:80px;top:130px;overflow:visible" width="50" height="50"><defs><filter id="sh2" x="-50%" y="-50%" width="200%" height="200%"><feGaussianBlur stdDeviation="3.5"/></filter></defs><g transform="translate(5 5)" opacity="0.35"><path d="M19.35 17.63 L8.10 8.30 L14.65 21.37 Z M19.91 20.22 L19.60 9.00 L14.09 18.78 Z M18.82 21.88 L30.70 9.00 L15.18 17.12 Z M17.17 22.50 L38.60 18.30 L16.83 16.50 Z M16.28 22.41 L39.70 25.10 L17.72 16.59 Z M14.18 18.48 L11.30 35.20 L19.82 20.52 Z M15.12 17.16 L5.90 28.40 L18.88 21.84 Z M16.71 16.51 L6.60 20.50 L17.29 22.49 Z " fill="#000" filter="url(#sh2)"/></g><path d="M18.72 18.13 L8.10 8.30 L15.28 20.87 Z" fill="#efe08a" stroke="#eba400" stroke-width="1.0" stroke-linejoin="round"/><path d="M19.14 20.03 L19.60 9.00 L14.86 18.97 Z" fill="#efe08a" stroke="#eba400" stroke-width="1.0" stroke-linejoin="round"/><path d="M18.34 21.25 L30.70 9.00 L15.66 17.75 Z" fill="#efe08a" stroke="#eba400" stroke-width="1.0" stroke-linejoin="round"/><path d="M17.12 21.70 L38.60 18.30 L16.88 17.30 Z" fill="#efe08a" stroke="#eba400" stroke-width="1.0" stroke-linejoin="round"/><path d="M16.47 21.64 L39.70 25.10 L17.53 17.36 Z" fill="#efe08a" stroke="#eba400" stroke-width="1.0" stroke-linejoin="round"/><path d="M14.93 18.75 L11.30 35.20 L19.07 20.25 Z" fill="#efe08a" stroke="#eba400" stroke-width="1.0" stroke-linejoin="round"/><path d="M15.62 17.78 L5.90 28.40 L18.38 21.22 Z" fill="#efe08a" stroke="#eba400" stroke-width="1.0" stroke-linejoin="round"/><path d="M16.79 17.31 L6.60 20.50 L17.21 21.69 Z" fill="#efe08a" stroke="#eba400" stroke-width="1.0" stroke-linejoin="round"/><circle cx="17" cy="19.5" r="2.6" fill="#dcdc78"/></svg>
<svg class="a" style="left:96px;top:149px;overflow:visible" width="22" height="30">
<defs><filter id="sh" x="-50%" y="-50%" width="200%" height="200%"><feGaussianBlur stdDeviation="2.8"/></filter></defs>
<g transform="translate(6.5 6.3)"><path d="M0.0 0.0 L0.0 21.2 L5.1 17.4 L7.5 23.9 L11.1 22.7 L9.0 16.2 L14.3 15.7 Z" fill="rgba(0,0,0,0.55)" filter="url(#sh)" transform="translate(0 0)"/></g>
<g transform="translate(2.5 2.3)"><path d="M0.0 0.0 L0.0 21.2 L5.1 17.4 L7.5 23.9 L11.1 22.7 L9.0 16.2 L14.3 15.7 Z" fill="#fff" stroke="#000" stroke-width="1.25" stroke-linejoin="round"/></g></svg>
</body></html>
